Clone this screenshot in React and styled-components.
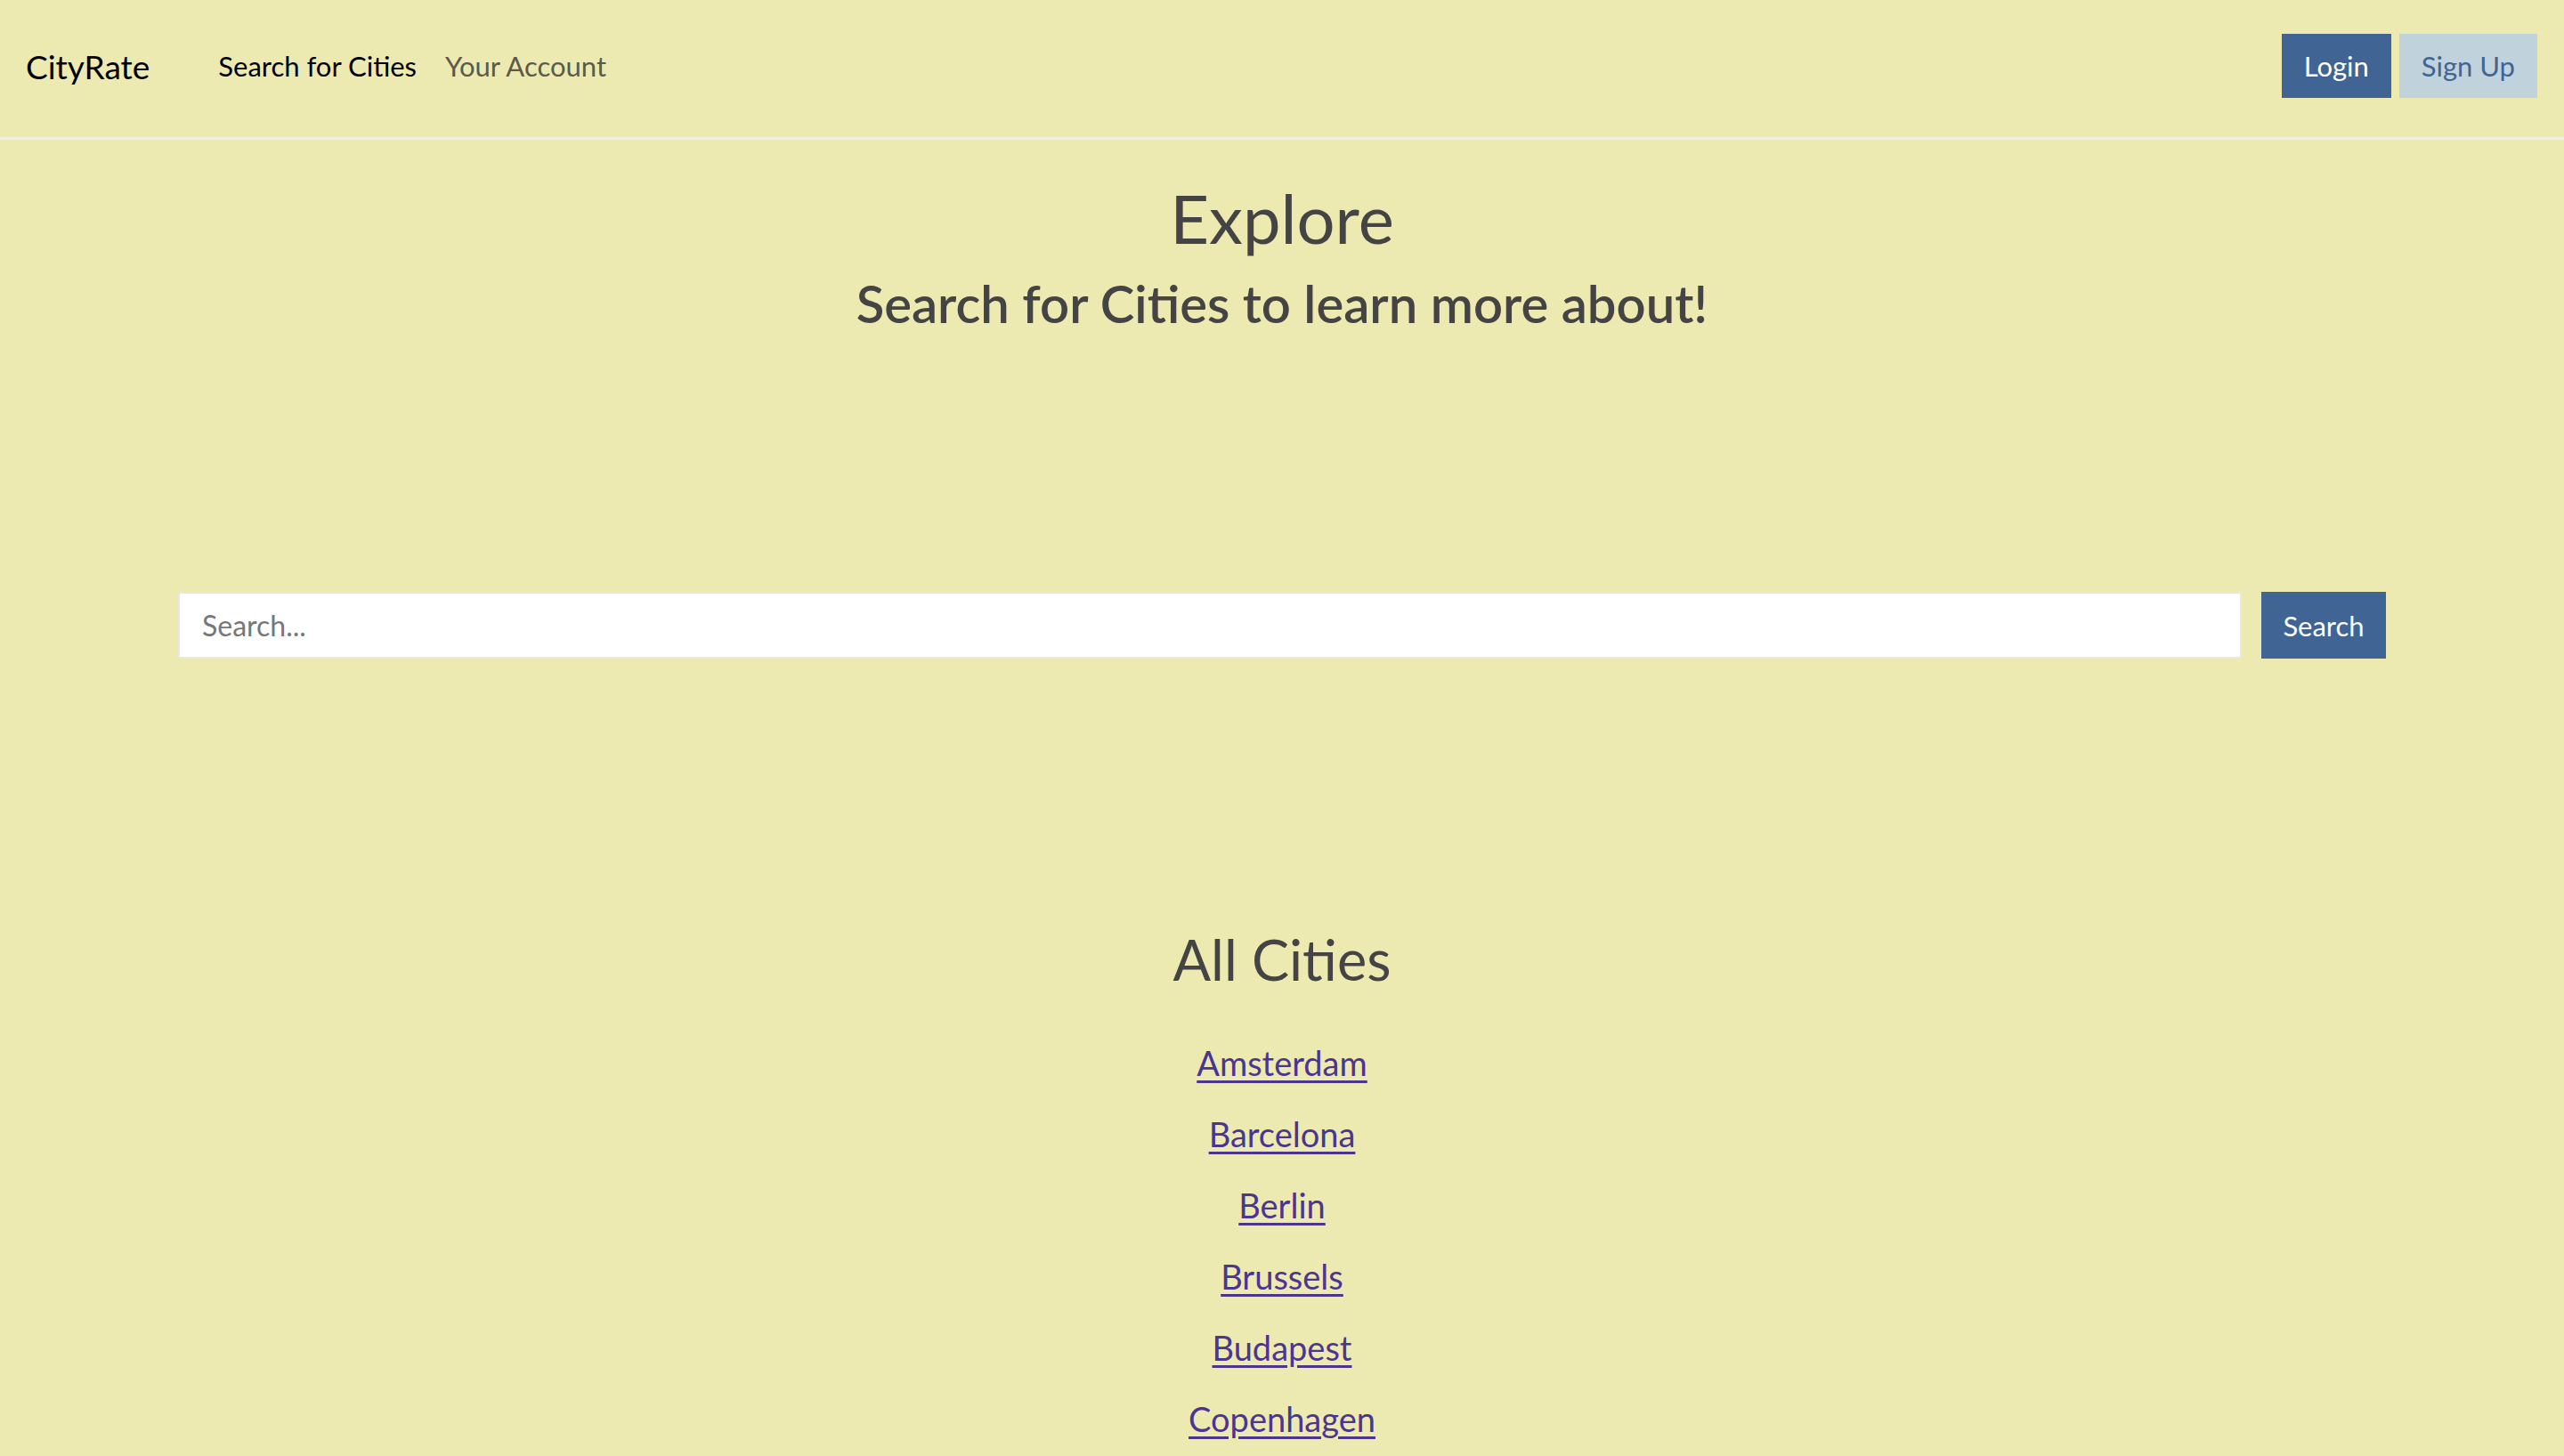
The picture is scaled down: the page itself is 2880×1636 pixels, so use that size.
import React from "react";
import styled, { createGlobalStyle } from "styled-components";

const cities = ["Amsterdam", "Barcelona", "Berlin", "Brussels", "Budapest", "Copenhagen"];

export default function App() {
  return (
    <>
      <GlobalStyle />
      <Navbar>
        <Brand href="#">CityRate</Brand>
        <NavLinks>
          <NavLink href="#" $active>Search for Cities</NavLink>
          <NavLink href="#">Your Account</NavLink>
        </NavLinks>
        <AuthButtons>
          <AuthButton $variant="primary">Login</AuthButton>
          <AuthButton $variant="light">Sign Up</AuthButton>
        </AuthButtons>
      </Navbar>
      <Main>
        <Hero>
          <Title>Explore</Title>
          <Subtitle>Search for Cities to learn more about!</Subtitle>
        </Hero>
        <SearchForm onSubmit={(e) => e.preventDefault()}>
          <SearchInput type="text" placeholder="Search..." />
          <SearchButton type="submit">Search</SearchButton>
        </SearchForm>
        <CitiesSection>
          <SectionTitle>All Cities</SectionTitle>
          <CityList>
            {cities.map((city) => (
              <CityItem key={city}>
                <CityLink href="#">{city}</CityLink>
              </CityItem>
            ))}
          </CityList>
        </CitiesSection>
      </Main>
    </>
  );
}

const GlobalStyle = createGlobalStyle`
  html, body {
    margin: 0;
    padding: 0;
    background: #edeab1;
  }
  body {
    font-family: Lato, "Liberation Sans", sans-serif;
    color: #444444;
  }
  * {
    box-sizing: border-box;
  }
`;

const Navbar = styled.nav`
  display: flex;
  align-items: center;
  height: 157px;
  padding: 0 30px 6px 29px;
  border-bottom: 3px solid #f0eedc;
`;

const Brand = styled.a`
  font-size: 37px;
  color: #000;
  text-decoration: none;
  margin-right: 77px;
`;

const NavLinks = styled.div`
  display: flex;
  align-items: center;
  gap: 32px;
  flex: 1;
`;

const NavLink = styled.a`
  font-size: 31px;
  text-decoration: none;
  color: ${(p) => (p.$active ? "#000" : "#5b5a4a")};
`;

const AuthButtons = styled.div`
  display: flex;
  gap: 9px;
`;

const AuthButton = styled.button`
  height: 72px;
  padding: 0 25px;
  border: none;
  border-radius: 0;
  font-family: inherit;
  font-size: 31px;
  cursor: pointer;
  background: ${(p) => (p.$variant === "primary" ? "#406494" : "#c0d3dc")};
  color: ${(p) => (p.$variant === "primary" ? "#fff" : "#406494")};
`;

const Main = styled.main`
  width: 2480px;
  margin: 0 auto;
`;

const Hero = styled.header`
  text-align: center;
  padding-top: 44px;
`;

const Title = styled.h1`
  margin: 0;
  font-size: 76px;
  font-weight: 400;
  line-height: 88px;
  color: #444;
`;

const Subtitle = styled.h2`
  margin: 19px 0 0;
  font-size: 58px;
  font-weight: 600;
  line-height: 66px;
  color: #444;
`;

const SearchForm = styled.form`
  display: flex;
  gap: 22px;
  margin-top: 291px;
`;

const SearchInput = styled.input`
  flex: 1;
  height: 75px;
  padding: 0 25px;
  border: 2px solid #e9e7e1;
  border-radius: 0;
  background: #fff;
  font-family: inherit;
  font-size: 32px;
  color: #444;
  outline: none;

  &::placeholder {
    color: #777;
  }
`;

const SearchButton = styled.button`
  width: 140px;
  height: 75px;
  border: none;
  border-radius: 0;
  background: #406494;
  color: #fff;
  font-family: inherit;
  font-size: 31px;
  cursor: pointer;
`;

const CitiesSection = styled.section`
  text-align: center;
  margin-top: 298px;
`;

const SectionTitle = styled.h2`
  margin: 0;
  font-size: 63px;
  font-weight: 400;
  line-height: 79px;
  color: #444;
`;

const CityList = styled.ul`
  list-style: none;
  margin: 37px 0 0;
  padding: 0;
`;

const CityItem = styled.li`
  font-size: 38px;
  line-height: 80px;
`;

const CityLink = styled.a`
  color: #4b3591;
  text-decoration: underline;
  text-underline-offset: 5px;
`;
